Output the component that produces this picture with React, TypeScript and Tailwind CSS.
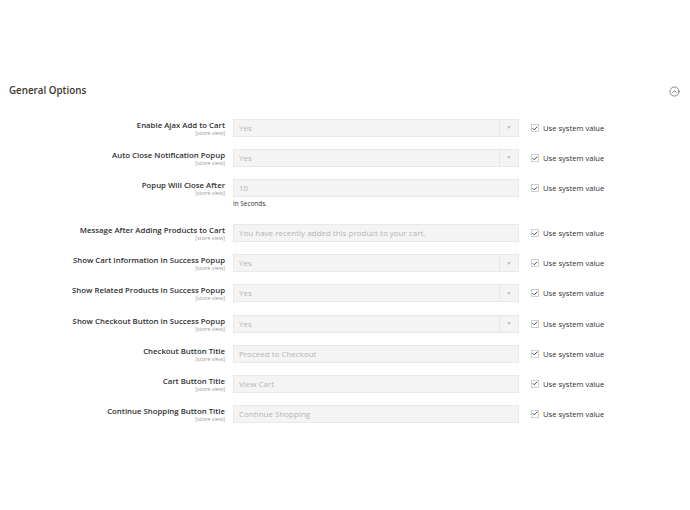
import { CircleChevronUp, Check } from "lucide-react";

type Row = {
  label: string;
  value: string;
  kind: "select" | "text";
  note?: string;
};

const rows: Row[] = [
  { label: "Enable Ajax Add to Cart", value: "Yes", kind: "select" },
  { label: "Auto Close Notification Popup", value: "Yes", kind: "select" },
  { label: "Popup Will Close After", value: "10", kind: "text", note: "In Seconds." },
  { label: "Message After Adding Products to Cart", value: "You have recently added this product to your cart.", kind: "text" },
  { label: "Show Cart Information in Success Popup", value: "Yes", kind: "select" },
  { label: "Show Related Products in Success Popup", value: "Yes", kind: "select" },
  { label: "Show Checkout Button in Success Popup", value: "Yes", kind: "select" },
  { label: "Checkout Button Title", value: "Proceed to Checkout", kind: "text" },
  { label: "Cart Button Title", value: "View Cart", kind: "text" },
  { label: "Continue Shopping Button Title", value: "Continue Shopping", kind: "text" },
];

function Field({ row }: { row: Row }) {
  return (
    <div className="flex h-[18px] w-[286px] items-center border border-[#e8e8e8] bg-[#f4f4f4]">
      <span className="flex-1 truncate pl-[5px] text-[8px] leading-[12px] text-[#b5b5b5]">
        {row.value}
      </span>
      {row.kind === "select" && (
        <span className="flex h-full w-[19px] items-center justify-center border-l border-[#e6e6e6] text-[5px] text-[#b0b0b0]">
          ▼
        </span>
      )}
    </div>
  );
}

export default function App() {
  return (
    <div
      className="min-h-[510px] w-[690px] bg-white px-[9px] pt-[83px] text-[#303030]"
      style={{ fontFamily: '"Open Sans", "Liberation Sans", sans-serif' }}
    >
      <div className="flex items-center justify-between">
        <h2 className="text-[9.8px] font-semibold leading-[16px] text-[#41362f]">General Options</h2>
        <CircleChevronUp className="mr-[1px] size-[11px] text-[#555]" strokeWidth={1.5} />
      </div>

      <div className="mt-[20px] flex flex-col gap-[12.1px]">
        {rows.map((row) => (
          <div key={row.label}>
            <div className="flex items-start">
              <div className="w-[216px] pt-[1px] text-right">
                <div className="text-[7.8px] font-semibold leading-[10px] text-[#303030]">{row.label}</div>
                <div className="text-[5.5px] leading-[7px] text-[#999]">[store view]</div>
              </div>
              <div className="ml-[8px]">
                <Field row={row} />
              </div>
              <label className="ml-[12px] flex h-[18px] items-center gap-[4px]">
                <span className="flex size-[8px] items-center justify-center border border-[#cfcfcf] bg-white">
                  <Check className="size-[7px] text-[#333]" strokeWidth={3.5} />
                </span>
                <span className="text-[7.6px] leading-[10px] text-[#303030]">Use system value</span>
              </label>
            </div>
            {row.note && (
              <div className="ml-[224px] h-[15px] pt-[3px] text-[6.4px] leading-[8px] text-[#303030]">
                {row.note}
              </div>
            )}
          </div>
        ))}
      </div>
    </div>
  );
}
